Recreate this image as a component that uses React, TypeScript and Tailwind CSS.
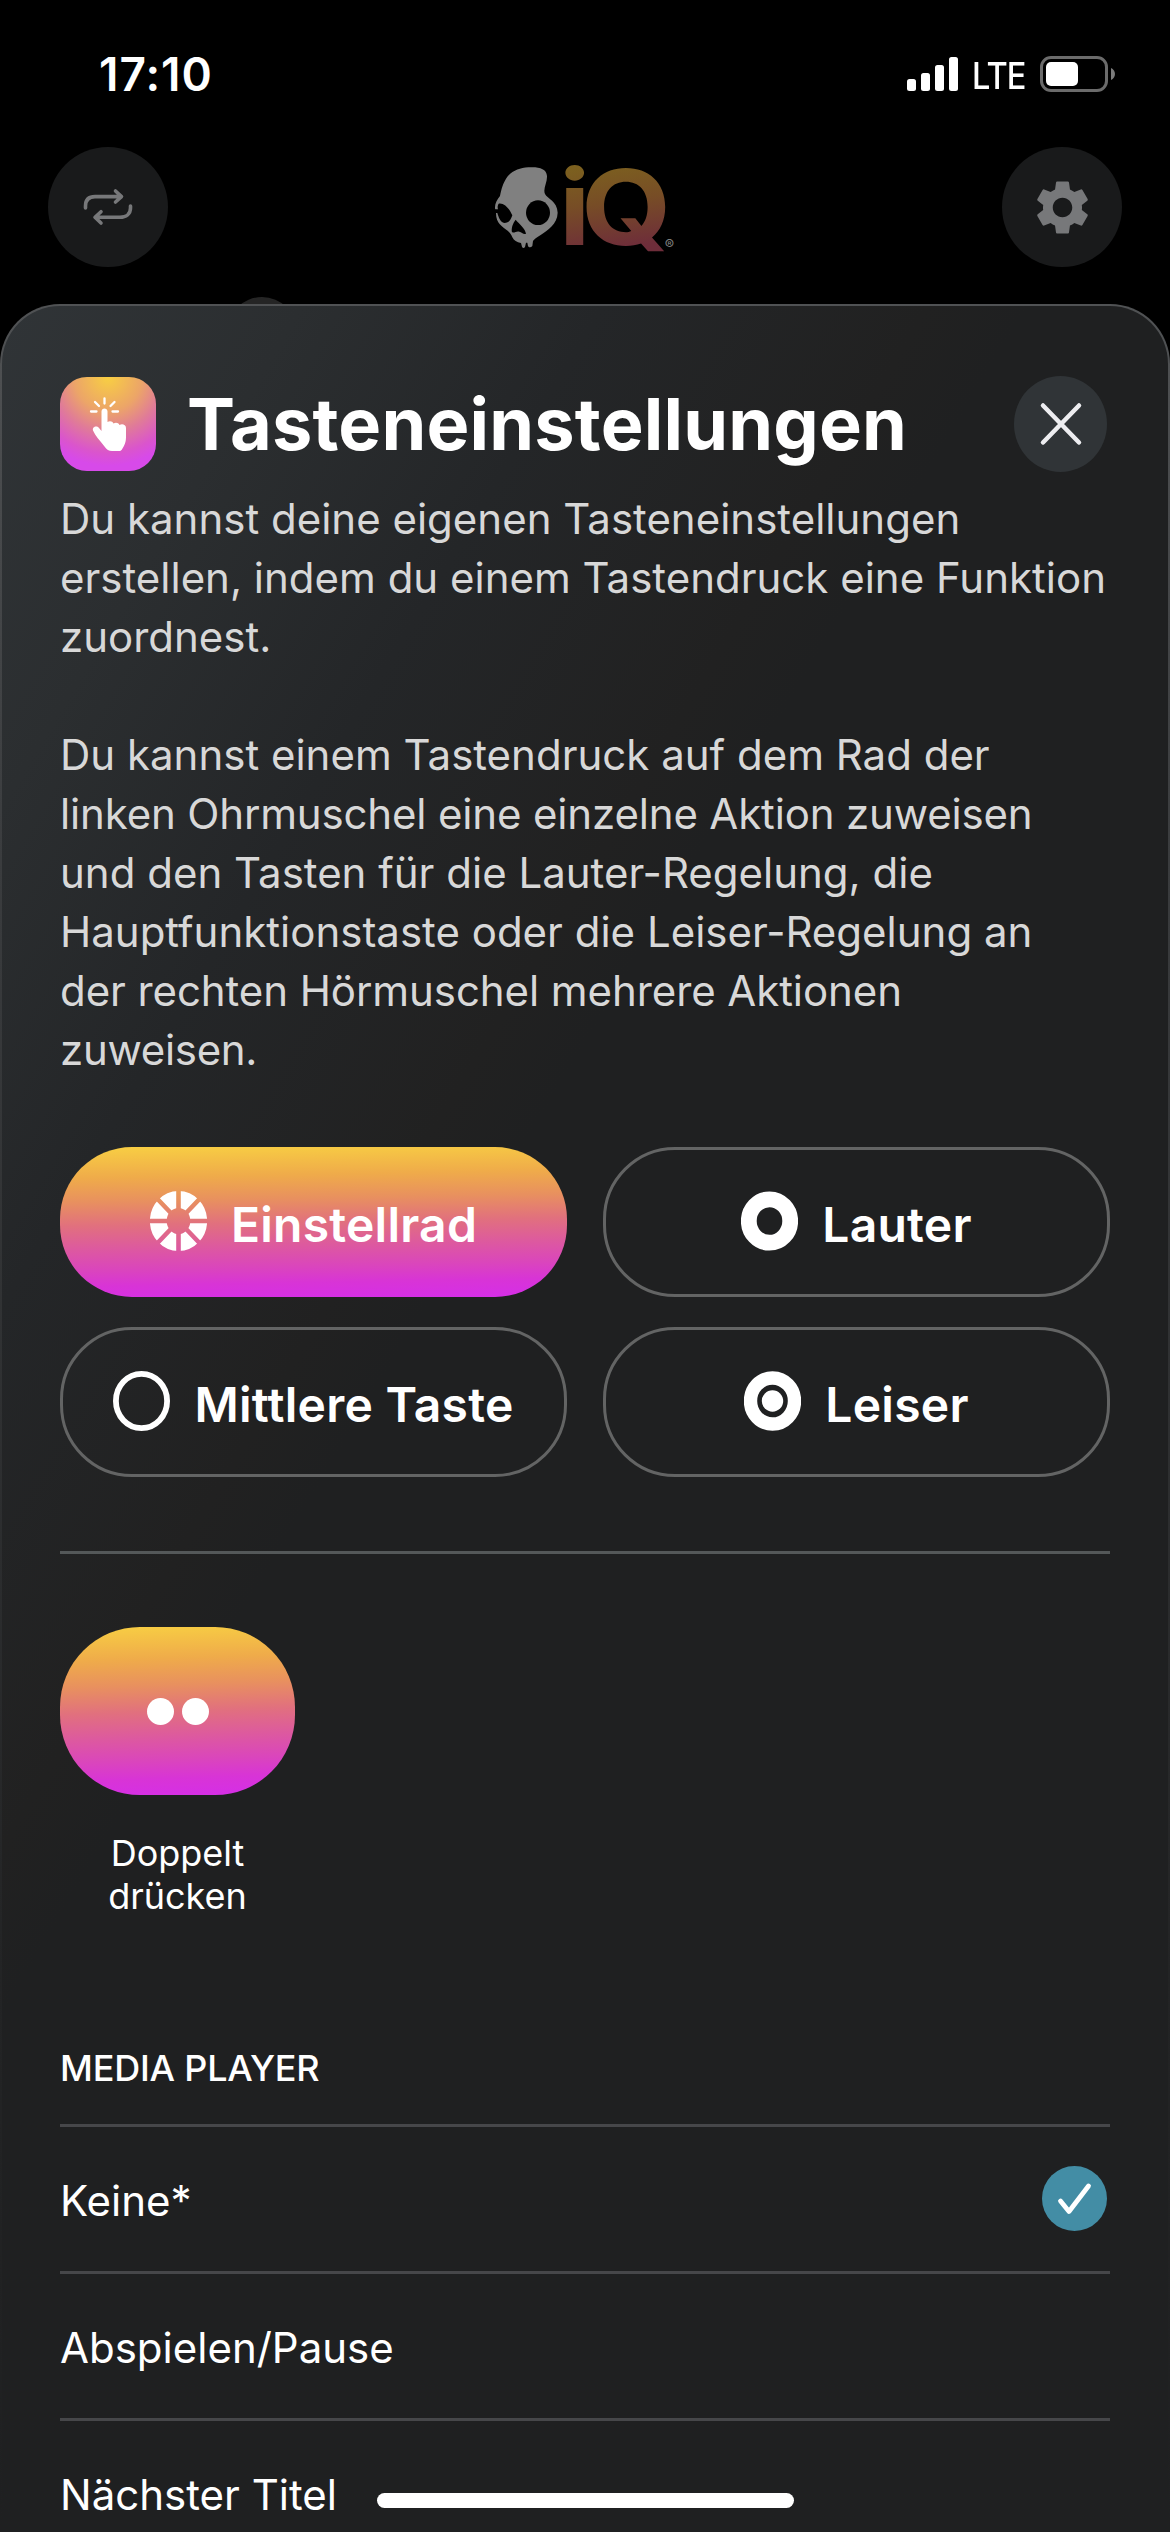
import type { ReactNode } from 'react'
import { MdSettings } from 'react-icons/md'

interface ControlButton {
  label: string
  icon: ReactNode
  active?: boolean
}

function DialIcon() {
  return (
    <svg className="w-[57px] h-[60px]" viewBox="0 0 57 60" fill="none">
      <mask id="dial-spokes" maskUnits="userSpaceOnUse" x="0" y="0" width="57" height="60">
        <rect width="57" height="60" fill="white" />
        <g stroke="black" strokeWidth="4.6">
          <path d="M28.5 0V60M0 30H57M7.5 8L49.5 52M49.5 8L7.5 52" />
        </g>
      </mask>
      <ellipse cx="28.5" cy="30" rx="20.2" ry="21.5" stroke="white" strokeWidth="16.8" mask="url(#dial-spokes)" />
    </svg>
  )
}

function LouderIcon() {
  return (
    <svg className="w-[57px] h-[60px]" viewBox="0 0 57 60" fill="none">
      <ellipse cx="28.5" cy="30" rx="20.7" ry="21.7" stroke="white" strokeWidth="15.8" />
    </svg>
  )
}

function CenterIcon() {
  return (
    <svg className="w-[57px] h-[60px]" viewBox="0 0 57 60" fill="none">
      <ellipse cx="28.5" cy="30" rx="25.6" ry="27.1" stroke="white" strokeWidth="5.8" />
    </svg>
  )
}

function QuieterIcon() {
  return (
    <svg className="w-[57px] h-[60px]" viewBox="0 0 57 60" fill="none">
      <ellipse cx="28.5" cy="30" rx="22" ry="23" stroke="white" strokeWidth="13.4" />
      <circle cx="28.5" cy="30" r="10.7" fill="white" />
    </svg>
  )
}

const controls: ControlButton[] = [
  { label: 'Einstellrad', icon: <DialIcon />, active: true },
  { label: 'Lauter', icon: <LouderIcon /> },
  { label: 'Mittlere Taste', icon: <CenterIcon /> },
  { label: 'Leiser', icon: <QuieterIcon /> }
]

const actions = [
  { label: 'Keine*', selected: true },
  { label: 'Abspielen/Pause', selected: false },
  { label: 'Nächster Titel', selected: false }
]

function StatusBar() {
  return (
    <div className="h-[147px] shrink-0 flex justify-between pl-[99px] pr-[55px] pt-[56px] text-white">
      <span className="text-[46px] leading-[36px] font-semibold tracking-[1px]">17:10</span>
      <div className="flex h-[36px] items-center">
        <svg className="w-[51px] h-[36px]" viewBox="0 0 51 36" fill="white">
          <rect x="0" y="23" width="9" height="12" rx="2.5" />
          <rect x="14" y="17" width="9" height="18" rx="2.5" />
          <rect x="28" y="9" width="9" height="26" rx="2.5" />
          <rect x="42" y="1" width="9" height="34" rx="2.5" />
        </svg>
        <span className="ml-[14px] mt-[3px] w-[54px] origin-left scale-x-[0.88] text-[37px] leading-[36px] tracking-[-1px] font-medium">LTE</span>
        <svg className="ml-[14px] w-[75px] h-[36px]" viewBox="0 0 75 36" fill="none">
          <rect x="1.5" y="1.5" width="65" height="33" rx="9.5" stroke="#6b6b6b" strokeWidth="3" />
          <rect x="6" y="6" width="32" height="24" rx="5" fill="white" />
          <path d="M71 12C73.5 13 75 15.500 75 18S73.500 23 71 24Z" fill="#7b7b7b" />
        </svg>
      </div>
    </div>
  )
}

function Logo() {
  return (
    <svg className="w-[230px] h-[130px]" viewBox="0 0 690 390">
      <defs>
        <linearGradient id="logo-fill" gradientUnits="userSpaceOnUse" x1="110" y1="-242" x2="150" y2="14">
          <stop offset="0" stopColor="#7c601f" />
          <stop offset="0.45" stopColor="#774d26" />
          <stop offset="1" stopColor="#6e2d3a" />
        </linearGradient>
      </defs>
      <path
        fill="#808080"
        d="M175 82C206 80 229 85 231 108C232 128 218 146 225 162C232 176 262 184 263 218C262 254 232 270 212 285C200 293 192 298 189 303L187 318C183 323 176 323 174 318L172 308H168L165 321C162 325 158 325 156 320L153 309C140 307 132 302 127 292C124 284 120 278 113 272C97 261 78 250 78 220L75 205C74 190 82 178 90 168C94 148 98 130 112 110C130 90 150 84 175 82Z"
      />
      <path fill="black" d="M70 208H84C82 203 83 195 86 191C102 188 118 205 127 226C122 242 115 249 103 249C91 247 86 232 82 219H70Z" />
      <ellipse cx="204" cy="218" rx="36" ry="37" fill="black" />
      <path fill="black" d="M137 239C128 250 123 266 126 277C135 279 140 272 148 275C155 276 160 284 168 281C166 266 148 252 137 239Z" />
      <text transform="translate(267 314) scale(1.1 0.99)" fontSize="316" fontWeight="700" letterSpacing="-25" fill="url(#logo-fill)">iQ</text>
      <text x="584" y="331" fontSize="42" fill="#808080">®</text>
    </svg>
  )
}

function Header() {
  return (
    <div className="h-[157px] shrink-0 flex items-start justify-between px-12">
      <button className="size-[120px] rounded-full bg-[#191a1b] flex items-center justify-center">
        <svg className="w-[54px] h-[42px]" viewBox="81 186 54 42" fill="none" stroke="#77787a" strokeWidth="3.600" strokeLinecap="round" strokeLinejoin="round">
          <path d="M85.500 208V206C85.500 199 89 196.600 95 196.600H121M115.500 191L121.500 196.600L115.500 202" />
          <path d="M130.500 206V208C130.500 214 126 217.300 120 217.300H95.500M101 211.700L95 217.300L101 223" />
        </svg>
      </button>
      <div className="-mt-[7px]">
        <Logo />
      </div>
      <button className="size-[120px] rounded-full bg-[#191a1b] flex items-center justify-center">
        <MdSettings className="size-[65px] text-[#77787a]" />
      </button>
    </div>
  )
}

function TapIcon() {
  return (
    <div className="w-[96px] h-[94px] rounded-[27px] bg-[radial-gradient(circle_at_50%_0%,#f8cf42,#eca568_32%,#e07b98_52%,#da55cc_72%,#d74ae9_84%)]">
      <svg className="w-[96px] h-[94px]" viewBox="60 377 96 94" fill="none">
        <path stroke="white" strokeWidth="2.300" strokeLinecap="round" d="M104.500 398.500V403.500M95 402L99 406M114.500 402L110.500 406M91 411.500H96.500M112.500 411.500H118" />
        <path
          fill="white"
          d="M101.500 411.500C101.500 407.500 107.500 407.500 107.500 411.500V422C109.500 420.500 112.500 421 113.500 423.500C115.500 422 118.500 422.500 119.500 425C122 423.500 126 424.500 126 428V437C126 443 124 446 122.500 448.500C121.500 450.500 120.500 451 119 451H112C109 451 106.500 449.500 104.500 446.500C99.500 440 95.500 436 93 430.500C92 427 96.500 425 99 428L101.500 431Z"
        />
      </svg>
    </div>
  )
}

function CheckBadge() {
  return (
    <svg className="size-[65px] mr-[3px] -mt-[1px]" viewBox="0 0 65 65" fill="none">
      <circle cx="32.500" cy="32.500" r="32.500" fill="#438da5" />
      <path d="M18.500 35L27 45.500L46.500 20" stroke="white" strokeWidth="4.800" strokeLinecap="round" strokeLinejoin="round" />
    </svg>
  )
}

export default function App() {
  return (
    <div className="relative w-[1170px] h-[2532px] overflow-hidden bg-black flex flex-col font-['Inter','Liberation_Sans',sans-serif]">
      <StatusBar />
      <Header />

      {/* Headphone band peeking out behind the sheet */}
      <div className="absolute left-[227px] top-[297px] w-[70px] h-[70px] rounded-full bg-[#252525]" />

      {/* Outer layer is the hairline edge that fades towards the bottom */}
      <div className="relative flex-1 min-h-0 flex overflow-hidden rounded-t-[60px] bg-[linear-gradient(180deg,#505254_0%,#3a3c3e_25%,#232425_75%,#1f2021_100%)] px-[2px] pt-[2px]">
        <div className="flex-1 min-w-0 overflow-hidden rounded-t-[58px] bg-[linear-gradient(121deg,#303437_0%,#2b2e30_12%,#242628_24%,#212121_37%,#1f2021_41%)] px-[58px] pt-[71px]">
          <div className="flex items-center h-[94px]">
            <TapIcon />
            <h1 className="ml-[31px] text-[72px] leading-[94px] font-bold tracking-[0.2px] text-white whitespace-nowrap">
              Tasteneinstellungen
            </h1>
            <button className="ml-auto mr-[3px] w-[93px] h-[96px] shrink-0 rounded-[50%] bg-[#303437] flex items-center justify-center">
              <svg className="w-[44px] h-[46px]" viewBox="0 0 44 46" fill="none" stroke="#ededf0" strokeWidth="4.500" strokeLinecap="round">
                <path d="M4 4.500L40 41.500M40 4.500L4 41.500" />
              </svg>
            </button>
          </div>

          <div className="mt-[18px] text-[42px] leading-[59px] text-[#d8d8d8] whitespace-nowrap">
            <p>
              Du kannst deine eigenen Tasteneinstellungen
              <br />
              erstellen, indem du einem Tastendruck eine Funktion
              <br />
              zuordnest.
            </p>
            <p className="mt-[59px]">
              Du kannst einem Tastendruck auf dem Rad der
              <br />
              <span className="tracking-[-0.16px]">linken Ohrmuschel eine einzelne Aktion zuweisen</span>
              <br />
              und den Tasten für die Lauter-Regelung, die
              <br />
              Hauptfunktionstaste oder die Leiser-Regelung an
              <br />
              <span className="tracking-[-0.08px]">der rechten Hörmuschel mehrere Aktionen</span>
              <br />
              <span className="tracking-[-0.3px]">zuweisen.</span>
            </p>
          </div>

          <div className="mt-[68px] grid grid-cols-2 gap-x-[36px] gap-y-[30px]">
            {controls.map((control) => (
              <button
                key={control.label}
                className={
                  control.active
                    ? 'h-[150px] rounded-[72px] flex items-center justify-center bg-[linear-gradient(179deg,#f8cf43_0%,#efab4a_20%,#e8905f_35%,#e1707e_50%,#dd5a9e_64%,#da45bd_78%,#d834d6_88%,#d52ee8_100%)]'
                    : 'h-[150px] rounded-[72px] flex items-center justify-center border-3 border-[#636464]'
                }
              >
                <span className="-mt-[2px]">{control.icon}</span>
                <span className="ml-[24px] mt-[5px] text-[48px] leading-[58px] font-semibold tracking-[0.25px] text-white whitespace-nowrap">
                  {control.label}
                </span>
              </button>
            ))}
          </div>

          <div className="mt-[74px] h-[3px] bg-[#545859]" />

          <div className="mt-[73px] w-[235px] flex flex-col items-center">
            <button className="w-[235px] h-[168px] rounded-[80px] flex items-center justify-center gap-[8px] bg-[linear-gradient(178deg,#f8cf43_0%,#efab4a_20%,#e8905f_35%,#e1707e_50%,#dd5a9e_64%,#da45bd_78%,#d834d6_88%,#d52ee8_100%)]">
              <span className="size-[27px] rounded-full bg-white" />
              <span className="size-[27px] rounded-full bg-white" />
            </button>
            <span className="mt-[37px] text-center text-[36px] leading-[43px] text-white">
              Doppelt
              <br />
              drücken
            </span>
          </div>

          <h2 className="mt-[129px] text-[36px] leading-[43px] font-medium tracking-[-0.2px] text-white">MEDIA PLAYER</h2>
          <ul className="mt-[34px]">
            {actions.map((action) => (
              <li key={action.label} className="h-[147px] border-t-3 border-[#46474a] flex items-center justify-between">
                <span className="mt-[3px] text-[42px] leading-[59px] text-white">{action.label}</span>
                {action.selected && <CheckBadge />}
              </li>
            ))}
          </ul>
        </div>
      </div>

      {/* Home indicator */}
      <div className="absolute left-[377px] top-[2493px] w-[417px] h-[15px] rounded-full bg-white" />
    </div>
  )
}
